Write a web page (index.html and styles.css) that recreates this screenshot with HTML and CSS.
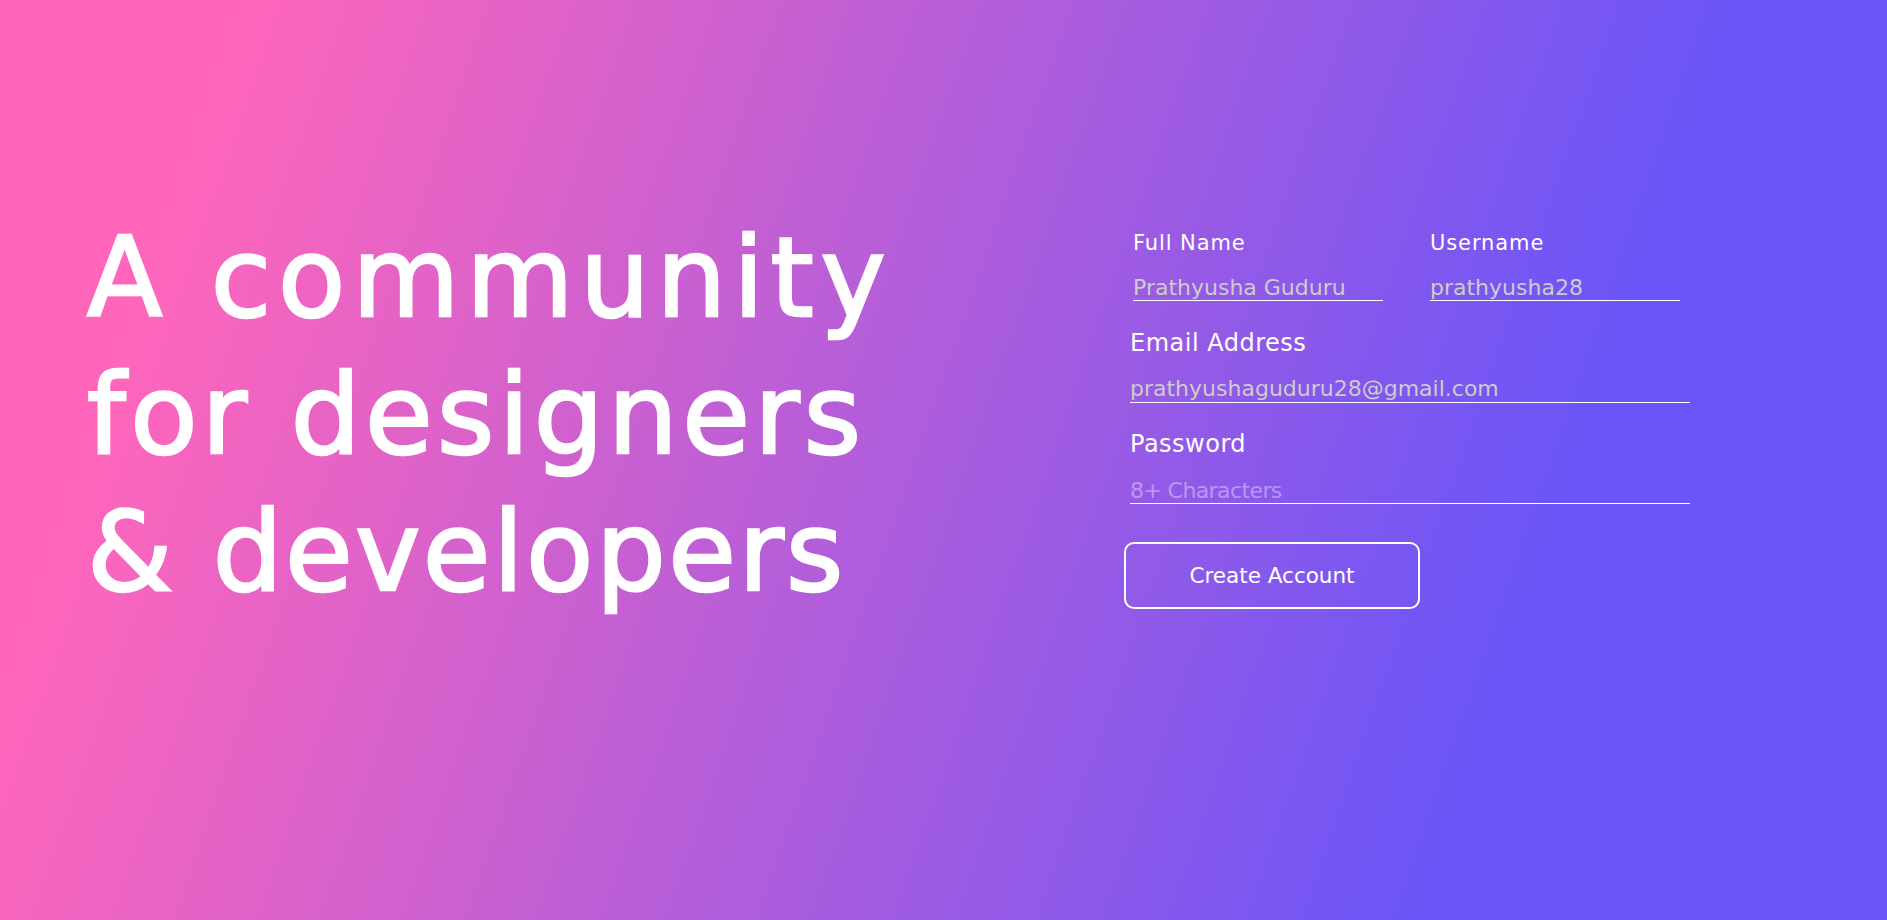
FILE: index.html
```html
<!DOCTYPE html>
<html lang="en">
<head>
<meta charset="utf-8">
<title>Sign up</title>
<link rel="stylesheet" href="styles.css">
</head>
<body>
<main class="page">
  <section class="hero">
    <h1 class="headline">
      <span class="line line-1">A community</span>
      <span class="line line-2">for designers</span>
      <span class="line line-3">&amp; developers</span>
    </h1>
  </section>
  <form class="signup">
    <div class="row">
      <div class="field-half">
        <label class="label label-sm" for="fullname">Full Name</label>
        <input id="fullname" class="input input-half" type="text" value="Prathyusha Guduru">
      </div>
      <div class="field-half">
        <label class="label label-sm" for="username">Username</label>
        <input id="username" class="input input-half" type="text" value="prathyusha28">
      </div>
    </div>
    <div class="field">
      <label class="label" for="email">Email Address</label>
      <input id="email" class="input input-full" type="text" value="prathyushaguduru28@gmail.com">
    </div>
    <div class="field">
      <label class="label" for="password">Password</label>
      <input id="password" class="input input-full" type="password" placeholder="8+ Characters">
    </div>
    <button class="btn" type="button">Create Account</button>
  </form>
</main>
</body>
</html>
```

FILE: styles.css
```css
* {
  box-sizing: border-box;
}

html,
body {
  margin: 0;
  height: 100%;
}

.page {
  height: 100vh;
  display: flex;
  align-items: flex-start;
  padding: 210px 0 0 87px;
  background: linear-gradient(109deg, #ff66bb 11%, #6a55f8 79%);
  font-family: "DejaVu Sans", sans-serif;
  color: #fff;
  overflow: hidden;
}

.hero {
  flex: 0 0 1043px;
}

.headline {
  margin: 0;
  font-weight: normal;
  font-size: 110px;
  line-height: 137px;
  -webkit-text-stroke: 2.6px #fff;
}

.line {
  display: block;
  white-space: nowrap;
}

.line-1 {
  letter-spacing: 6.8px;
}

.line-2 {
  letter-spacing: 4.4px;
}

.line-3 {
  letter-spacing: 2.5px;
}

.signup {
  margin-top: 20px;
  width: 560px;
  display: flex;
  flex-direction: column;
}

.row {
  display: flex;
  gap: 47px;
  padding-left: 3px;
}

.field {
  display: flex;
  flex-direction: column;
  margin-top: 27.5px;
}

.field-half {
  display: flex;
  flex-direction: column;
}

.label {
  display: block;
  font-size: 24px;
  line-height: 28px;
  letter-spacing: 0.5px;
  margin-bottom: 19px;
}

.label-sm {
  font-size: 21px;
  line-height: 26px;
  letter-spacing: 0.9px;
  margin-bottom: 18px;
}

.input {
  display: block;
  height: 27px;
  padding: 0;
  border: 0;
  border-bottom: 1px solid #fff;
  border-radius: 0;
  background: transparent;
  outline: none;
  font-family: "DejaVu Sans", sans-serif;
  font-size: 22px;
  color: #cccccc;
}

.input::placeholder {
  color: rgba(255, 255, 255, 0.4);
  letter-spacing: -0.6px;
}

.input-half {
  width: 250px;
}

.input-full {
  width: 560px;
}

.btn {
  margin-top: 38px;
  margin-left: -6px;
  width: 296px;
  height: 67px;
  padding: 0;
  border: 2px solid #fff;
  border-radius: 10px;
  background: transparent;
  color: #fff;
  font-family: "DejaVu Sans", sans-serif;
  font-size: 21.5px;
  cursor: pointer;
}
```
